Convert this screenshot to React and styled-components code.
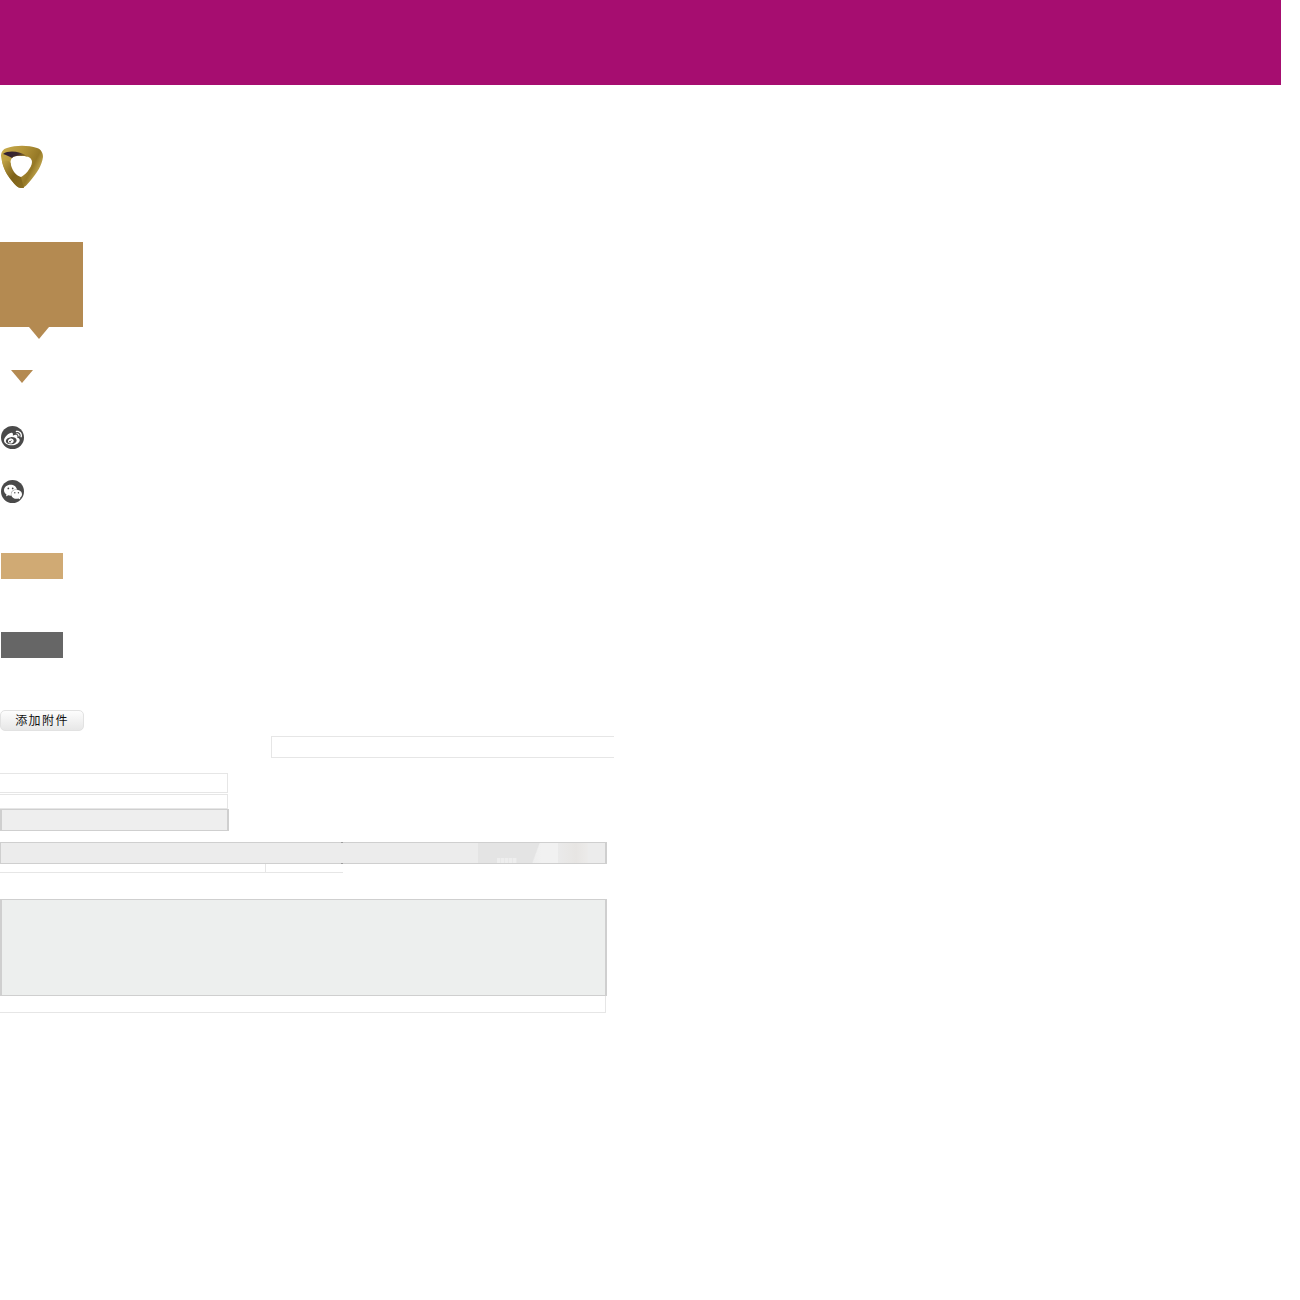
import React from "react";
import styled, { createGlobalStyle } from "styled-components";
import { SiSinaweibo, SiWechat } from "react-icons/si";

const GlobalStyle = createGlobalStyle`
  html, body {
    margin: 0;
    padding: 0;
    background: #fff;
    font-family: "Liberation Sans", "Noto Sans CJK SC", sans-serif;
  }
`;

export default function App() {
  return (
    <Page>
      <GlobalStyle />
      <Banner />
      <Logo viewBox="0 0 44 44">
        <defs>
          <linearGradient id="gold" x1="0" y1="0" x2="1" y2="0.5">
            <stop offset="0" stopColor="#c9ad4c" />
            <stop offset="0.45" stopColor="#b4953a" />
            <stop offset="0.8" stopColor="#957826" />
            <stop offset="1" stopColor="#cbb158" />
          </linearGradient>
          <linearGradient id="band" x1="0" y1="0" x2="1" y2="0.2">
            <stop offset="0" stopColor="#2b1b35" />
            <stop offset="0.65" stopColor="#3d2a2c" />
            <stop offset="1" stopColor="#9a7d2c" />
          </linearGradient>
          <linearGradient id="lower" x1="0" y1="0" x2="1" y2="1">
            <stop offset="0" stopColor="#c4a648" />
            <stop offset="0.55" stopColor="#7d6119" />
            <stop offset="1" stopColor="#8c7022" />
          </linearGradient>
        </defs>
        <path
          fill="url(#gold)"
          fillRule="evenodd"
          d="M1 11C1 7 3 4 7 3C16 0 28 0 37 3C41 4 43 8 43 12C42 20 37 28 31 35C27 40 24 43 21 43C18 43 15 40 12 36C6 29 2 20 1 11ZM12 13C10 15 10 20 12 25C14 29 18 33 21 32C24 31 32 23 32 17C32 13 28 11 23 11C18 10.500 14 11 12 13Z"
        />
        <path fill="url(#lower)" d="M2 16C5 15 9 15 10.700 18C11 24 16 31 21 32L24 43L21 43C18 43 15 40 12 36C7 30 3 23 2 16Z" />
        <path fill="url(#band)" d="M3 9C9 5 19 6 28 11.500C25 11 23 11 21 10.800C17 10.700 14 11 12 13C9 11 6 10 3 9Z" />
      </Logo>
      <Tile />
      <Caret />
      <SocialBadge $top={43}>
        <SiSinaweibo size={18} />
      </SocialBadge>
      <SocialBadge $top={31}>
        <SiWechat size={18} />
      </SocialBadge>
      <Swatch $color="#d0aa74" $top={50} />
      <Swatch $color="#666666" $top={53} />
      <AttachButton type="button">添加附件</AttachButton>
      <TopInput />
      <NarrowForm>
        <BlankRow $height={20} />
        <BlankRow $height={15} />
        <GrayField />
      </NarrowForm>
      <WideBar>
        <BarLeft />
        <BarRight />
      </WideBar>
      <CellRow>
        <Cell $width={266} />
        <Cell $width={77} $open />
      </CellRow>
      <TextBlock />
      <TextFooter />
    </Page>
  );
}

const Page = styled.div`
  display: flex;
  flex-direction: column;
  align-items: flex-start;
  width: 1300px;
  height: 1300px;
  overflow: hidden;
`;

const Banner = styled.div`
  width: 1281px;
  height: 85px;
  background: #a60d70;
`;

const Logo = styled.svg`
  display: block;
  width: 44px;
  height: 44px;
  margin-top: 60px;
`;

const Tile = styled.div`
  position: relative;
  width: 83px;
  height: 85px;
  margin-top: 53px;
  background: #b48a51;

  &::after {
    content: "";
    position: absolute;
    left: 29px;
    top: 100%;
    border-style: solid;
    border-width: 12px 10.5px 0;
    border-color: #b48a51 transparent transparent;
  }
`;

const Caret = styled.div`
  width: 0;
  height: 0;
  margin: 43px 0 0 11px;
  border-style: solid;
  border-width: 13px 11px 0;
  border-color: #b48a51 transparent transparent;
`;

const SocialBadge = styled.div`
  display: flex;
  align-items: center;
  justify-content: center;
  width: 23px;
  height: 23px;
  margin: ${(p) => p.$top}px 0 0 1px;
  border-radius: 50%;
  background: #4a4a4a;
  color: #fff;
`;

const Swatch = styled.div`
  width: 62px;
  height: 26px;
  margin: ${(p) => p.$top}px 0 0 1px;
  background: ${(p) => p.$color};
`;

const AttachButton = styled.button`
  box-sizing: border-box;
  width: 84px;
  height: 21px;
  margin-top: 52px;
  padding: 0 0 2px;
  border: 1px solid #e2e2e2;
  border-radius: 5px;
  background: linear-gradient(#fdfdfd, #e7e7e7);
  color: #111;
  font-family: "Noto Sans CJK SC", sans-serif;
  font-size: 12px;
  line-height: 17px;
  letter-spacing: 1.4px;
`;

const TopInput = styled.div`
  box-sizing: border-box;
  width: 343px;
  height: 22px;
  margin: 5px 0 0 271px;
  border: 1px solid #e6e6e6;
  border-right: 0;
`;

const NarrowForm = styled.div`
  display: flex;
  flex-direction: column;
  align-items: flex-start;
  gap: 1px;
  margin-top: 15px;
`;

const BlankRow = styled.div`
  box-sizing: border-box;
  width: 228px;
  height: ${(p) => p.$height}px;
  border: 1px solid #e6e6e6;
  border-left: 0;
`;

const GrayField = styled.div`
  box-sizing: border-box;
  width: 229px;
  height: 22px;
  margin-top: -1px;
  border: 1px solid #cfcfcf;
  border-width: 1px 2px 1px 2px;
  background: #eeeeee;
`;

const WideBar = styled.div`
  display: flex;
  width: 607px;
  height: 22px;
  margin-top: 11px;
`;

const BarLeft = styled.div`
  box-sizing: border-box;
  width: 341px;
  border: 1px solid #cfcfcf;
  border-width: 1px 0 1px 1px;
  background: #ececec;
`;

const BarRight = styled.div`
  position: relative;
  box-sizing: border-box;
  width: 266px;
  border: 1px solid #cfcfcf;
  border-width: 1px 2px 1px 0;
  background:
    repeating-linear-gradient(90deg, #eeeeee 0 3px, #e8e8e8 3px 4px) 156px 15px / 20px 6px no-repeat,
    linear-gradient(110deg, #e4e4e4 0 88%, transparent 90%) 137px 0 / 62px 100% no-repeat,
    linear-gradient(90deg, #eaeaea, #e7e5e3 60%, #ecebea) 217px 0 / 30px 100% no-repeat,
    linear-gradient(90deg, #ececec 0 70%, #f1f1f1 76% 85%, #ececec 88%);

  &::before,
  &::after {
    content: "";
    position: absolute;
    left: 0;
    width: 2px;
    height: 1px;
    background: #9c9c9c;
  }
  &::before {
    top: -1px;
  }
  &::after {
    bottom: -1px;
  }
`;

const CellRow = styled.div`
  display: flex;
  height: 9px;
`;

const Cell = styled.div`
  box-sizing: border-box;
  width: ${(p) => p.$width}px;
  border-bottom: 1px solid #e6e6e6;
  border-right: ${(p) => (p.$open ? "0" : "1px solid #e6e6e6")};
`;

const TextBlock = styled.div`
  box-sizing: border-box;
  width: 607px;
  height: 97px;
  margin-top: 26px;
  border: 1px solid #cfcfcf;
  border-width: 1px 2px 1px 2px;
  background: #edefee;
`;

const TextFooter = styled.div`
  box-sizing: border-box;
  width: 606px;
  height: 17px;
  border: 1px solid #e6e6e6;
  border-width: 0 1px 1px 0;
`;
